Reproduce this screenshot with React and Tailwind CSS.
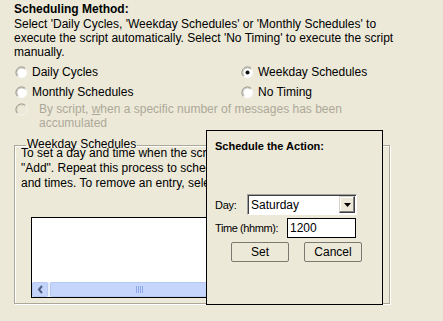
import React from 'react'

function Radio({ checked, disabled }) {
  return (
    <svg width="13" height="13" viewBox="0 0 13 13" className="shrink-0">
      <circle cx="6.5" cy="6.5" r="5.5" fill={disabled ? '#ece9d8' : '#fff'} />
      <path d="M2.6 10.4 A5.5 5.5 0 0 1 10.4 2.6" stroke="#85837a" strokeWidth="1" fill="none" />
      <path d="M3.3 9.7 A4.5 4.5 0 0 1 9.7 3.3" stroke={disabled ? '#d8d5c6' : '#c4c2b6'} strokeWidth="1" fill="none" />
      <path d="M10.4 2.6 A5.5 5.5 0 0 1 2.6 10.4" stroke="#f4f3ee" strokeWidth="1" fill="none" />
      {checked && <circle cx="6.5" cy="6.5" r="2" fill="#111" />}
    </svg>
  )
}

function RadioRow({ label, checked }) {
  return (
    <div className="flex h-[20px] items-center gap-[4px] pl-[1px]">
      <Radio checked={checked} />
      <span>{label}</span>
    </div>
  )
}

export default function App() {
  return (
    <div className="relative h-[321px] w-[443px] overflow-hidden bg-[#ece9d8] font-['Liberation_Sans',Arial,sans-serif] text-[12px] leading-[14px] text-black">
      <div className="pl-[14px] pt-[2px]">
        <div className="font-bold">Scheduling Method:</div>
        <p className="mt-[1px]">
          Select 'Daily Cycles, 'Weekday Schedules' or 'Monthly Schedules' to
          <br />
          execute the script automatically. Select 'No Timing' to execute the script
          <br />
          manually.
        </p>

        <div className="mt-[3px] grid grid-cols-[226px_1fr]">
          <RadioRow label="Daily Cycles" />
          <RadioRow label="Weekday Schedules" checked />
          <RadioRow label="Monthly Schedules" />
          <RadioRow label="No Timing" />
        </div>

        <div className="flex items-start pl-[1px] text-[#aca899]">
          <div className="pt-[1px]">
            <Radio disabled />
          </div>
          <p className="ml-[11px]">
            By script, <span className="underline">w</span>hen a specific number of messages has been
            <br />
            accumulated
          </p>
        </div>

        <fieldset className="mt-[9px] w-[376px] border border-[#aca899] px-[6px] pb-[5px] shadow-[1px_1px_0_#fff,inset_1px_1px_0_#fff]">
          <legend className="ml-[5px] px-[1px] pb-[2px] leading-[10px]">Weekday Schedules</legend>
          <p className="-mt-[5px] overflow-hidden whitespace-nowrap leading-[15px]">
            To set a day and time when the script should run, select them and
            <br />
            "Add". Repeat this process to schedule the script for more days
            <br />
            and times. To remove an entry, select it and click "Remove".
          </p>
          <div className="ml-[10px] mt-[26px] flex h-[81px] w-[340px] flex-col justify-end border border-black bg-white">
            <div className="flex h-[15px] items-stretch bg-[#e8edfc]">
              <div className="flex w-[16px] items-center justify-center rounded-[2px] border border-[#b7c9f2] bg-[#c3d3fa]">
                <svg width="7" height="9" viewBox="0 0 7 9">
                  <path d="M5 1 L2 4.5 L5 8" stroke="#4d6185" strokeWidth="2" fill="none" />
                </svg>
              </div>
              <div className="ml-[2px] flex w-[178px] items-center justify-center rounded-[2px] border border-[#b7c9f2] bg-[#c6d5fb]">
                <div className="flex gap-[1px]">
                  <div className="h-[7px] w-[1px] bg-[#8ea7e6]" />
                  <div className="h-[7px] w-[1px] bg-[#8ea7e6]" />
                  <div className="h-[7px] w-[1px] bg-[#8ea7e6]" />
                  <div className="h-[7px] w-[1px] bg-[#8ea7e6]" />
                </div>
              </div>
            </div>
          </div>
        </fieldset>
      </div>

      <div className="absolute left-[206px] top-[130px] h-[175px] w-[177px] border border-black bg-[#ece9d8] pl-[8px] pt-[8px]">
        <div className="text-[11px] font-bold">Schedule the Action:</div>

        <div className="mt-[41px] flex items-center">
          <span className="w-[32px] whitespace-nowrap text-[11px] tracking-[-0.3px]">Day:</span>
          <div className="flex h-[21px] w-[110px] items-center border border-[#a0a0a0] border-b-white border-r-white bg-white shadow-[inset_1px_1px_0_#404040]">
            <span className="flex-1 pl-[3px] pt-[1px]">Saturday</span>
            <div className="mr-[1px] flex h-[17px] w-[16px] items-center justify-center border border-[#d4d0c8] border-b-[#404040] border-r-[#404040] bg-[#ece9d8] shadow-[inset_-1px_-1px_0_#808080,inset_1px_1px_0_#fff]">
              <svg width="7" height="4" viewBox="0 0 7 4">
                <path d="M0 0 H7 L3.5 4 Z" fill="#000" />
              </svg>
            </div>
          </div>
        </div>

        <div className="mt-[3px] flex items-center">
          <span className="w-[72px] whitespace-nowrap text-[11px] tracking-[-0.4px]">Time (hhmm):</span>
          <div className="flex h-[20px] w-[69px] items-center border border-black bg-white pl-[2px]">1200</div>
        </div>

        <div className="ml-[16px] mt-[4px] flex gap-[15px]">
          <button className="h-[20px] w-[58px] rounded-[2px] border border-[#7a7a72] bg-[#ece9d8] text-center">Set</button>
          <button className="h-[20px] w-[58px] rounded-[2px] border border-[#7a7a72] bg-[#ece9d8] text-center">Cancel</button>
        </div>
      </div>
    </div>
  )
}
